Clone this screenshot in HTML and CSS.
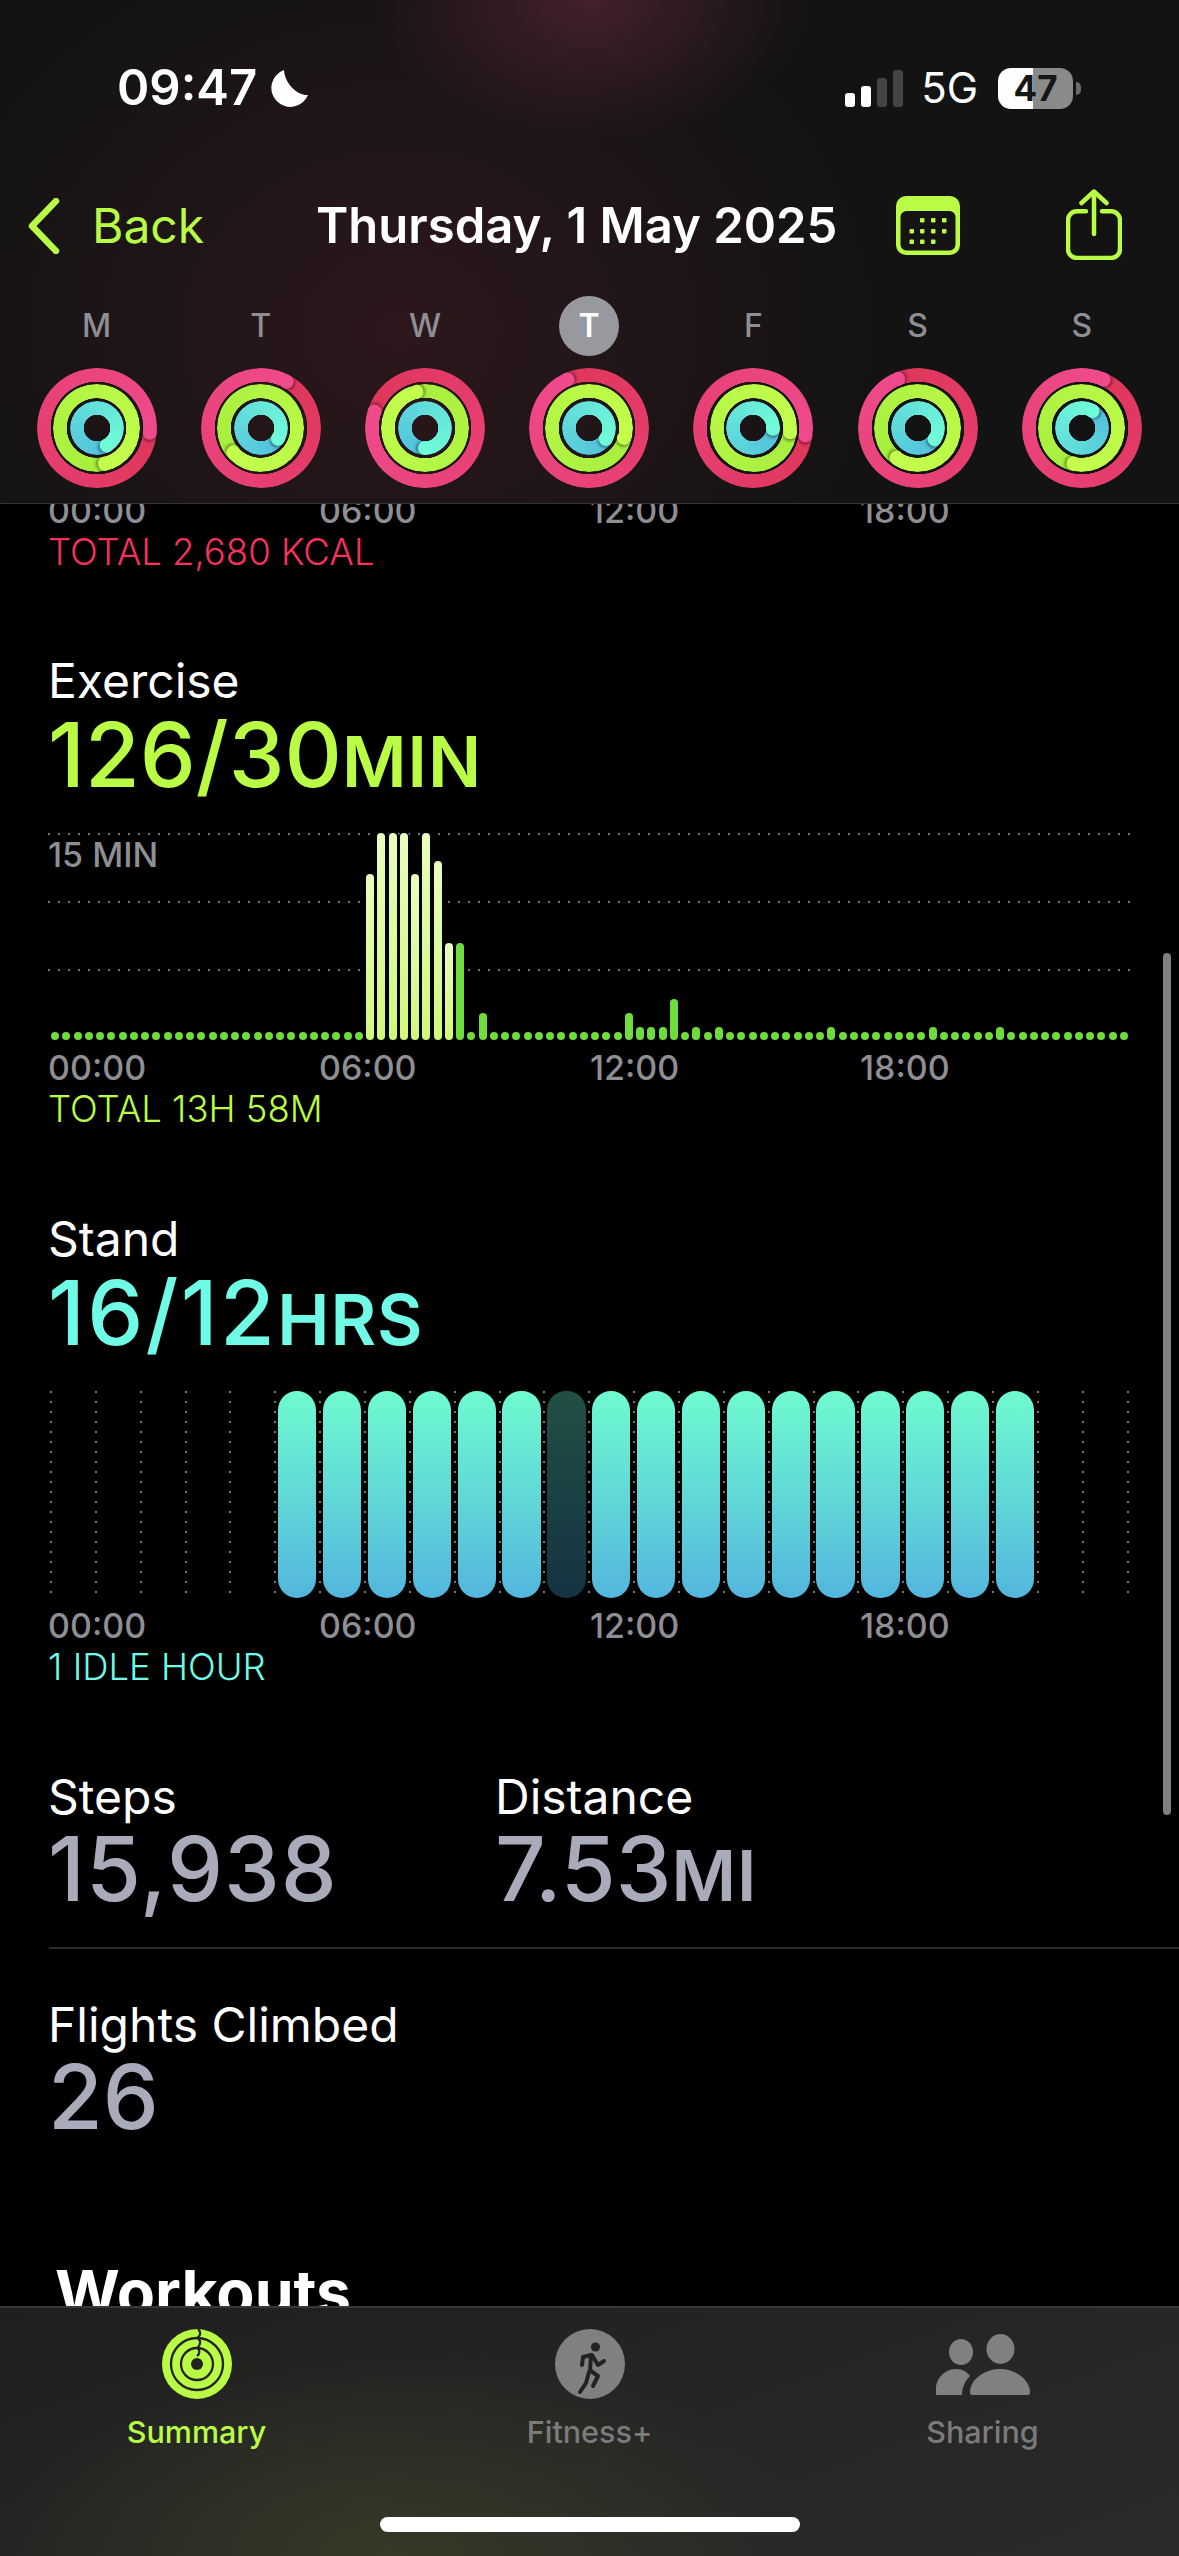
FILE: index.html
```html
<!DOCTYPE html>
<html lang="en">
<head>
  <meta charset="UTF-8" />
  <meta name="viewport" content="width=device-width, initial-scale=1.0"/>
  <title>Activity Summary</title>
  <link rel="stylesheet" href="styles.css">
</head>
<body>
  <div class="app">
    <header class="top-bar">
      <div class="status-row">
        <div class="status-left">
          <span class="clock">09:47</span>
          <svg class="moon" viewBox="0 0 39 37"><path d="M15 0A19 19 0 1 0 39 25C30 26 16 15 15 0Z" fill="#fff"/></svg>
        </div>
        <div class="status-right">
          <div class="signal">
            <i class="sig-1"></i><i class="sig-2"></i><i class="sig-3"></i><i class="sig-4"></i>
          </div>
          <span class="network">5G</span>
          <div class="battery"><span>47</span></div>
          <div class="battery-nub"></div>
        </div>
      </div>

      <nav class="nav-row">
        <svg class="chevron" viewBox="0 0 32 56"><path d="M28 3L4 28L28 53" fill="none" stroke="#b9fb45" stroke-width="6.5" stroke-linecap="round" stroke-linejoin="round"/></svg>
        <span class="back">Back</span>
        <span class="date-title">Thursday, 1 May 2025</span>
        <svg class="calendar" viewBox="0 0 64 59">
          <rect width="64" height="59" rx="10" fill="#b9fb45"/>
          <rect x="4.5" y="15" width="55" height="39.5" rx="6" fill="#151314"/>
          <g fill="#b9fb45">
            <rect x="24" y="22" width="4.5" height="4.5" rx="1"/><rect x="35" y="22" width="4.5" height="4.5" rx="1"/><rect x="46" y="22" width="4.5" height="4.5" rx="1"/>
            <rect x="13.5" y="33" width="4.5" height="4.5" rx="1"/><rect x="24" y="33" width="4.5" height="4.5" rx="1"/><rect x="35" y="33" width="4.5" height="4.5" rx="1"/><rect x="46" y="33" width="4.5" height="4.5" rx="1"/>
            <rect x="13.5" y="43.5" width="4.5" height="4.5" rx="1"/><rect x="24" y="43.5" width="4.5" height="4.5" rx="1"/><rect x="35" y="43.5" width="4.5" height="4.5" rx="1"/>
          </g>
        </svg>
        <svg class="share" viewBox="0 0 56 71">
          <g fill="none" stroke="#b9fb45" stroke-width="4.5" stroke-linecap="round" stroke-linejoin="round">
            <path d="M20 22.25H11a9 9 0 0 0-9 9V60a9 9 0 0 0 9 9H45a9 9 0 0 0 9-9V31.25a9 9 0 0 0-9-9H36"/>
            <path d="M28 3V45M15.5 14L28 2.5L40.5 14"/>
          </g>
        </svg>
      </nav>

      <div class="week" id="week"></div>
    </header>

    <main class="content">
      <section class="move-tail">
        <div class="axis"><span>00:00</span><span>06:00</span><span>12:00</span><span>18:00</span></div>
        <div class="total total-move">TOTAL 2,680 KCAL</div>
      </section>

      <section class="metric">
        <div class="metric-title">Exercise</div>
        <div class="metric-value lime value-tight">126/30<small>MIN</small></div>
        <div class="exercise-chart">
          <div class="grid-rows"><i></i><i></i><i></i></div>
          <div class="chart-note">15 MIN</div>
          <div class="bars" id="exerciseBars"></div>
        </div>
        <div class="axis"><span>00:00</span><span>06:00</span><span>12:00</span><span>18:00</span></div>
        <div class="total lime">TOTAL 13H 58M</div>
      </section>

      <section class="metric metric-stand">
        <div class="metric-title">Stand</div>
        <div class="metric-value mint value-wide">16/12<small>HRS</small></div>
        <div class="stand-chart" id="standBars"></div>
        <div class="axis"><span>00:00</span><span>06:00</span><span>12:00</span><span>18:00</span></div>
        <div class="total mint">1 IDLE HOUR</div>
      </section>

      <section class="metric stat-pair">
        <div class="stat-steps">
          <div class="metric-title">Steps</div>
          <div class="metric-value grey">15,938</div>
        </div>
        <div>
          <div class="metric-title">Distance</div>
          <div class="metric-value grey value-tight">7.53<small>MI</small></div>
        </div>
      </section>

      <div class="divider"></div>

      <section class="flights">
        <div class="metric-title">Flights Climbed</div>
        <div class="metric-value grey value-tight">26</div>
      </section>

      <h2 class="workouts">Workouts</h2>
    </main>

    <footer class="tab-bar">
      <div class="tab tab-active">
        <svg class="tab-icon" viewBox="0 0 70 70">
          <circle cx="35" cy="35" r="35" fill="#b9fb45"/>
          <g fill="none" stroke="#222" stroke-width="2.3">
            <circle cx="35" cy="35" r="26"/>
            <circle cx="35" cy="35" r="16"/>
            <path d="M36 0C39 3 39 6 35.5 9C39 11 39 15 35.5 19C38 21 38 25 35 27"/>
          </g>
          <circle cx="35" cy="35" r="6" fill="#222"/>
        </svg>
        <span>Summary</span>
      </div>
      <div class="tab">
        <svg class="tab-icon" viewBox="0 0 70 70">
          <circle cx="35" cy="35" r="35" fill="#808080"/>
          <circle cx="40.5" cy="18" r="4.6" fill="#222"/>
          <g fill="none" stroke="#222" stroke-width="4" stroke-linecap="round" stroke-linejoin="round">
            <path d="M35 42L36 26L28 28L27 36"/>
            <path d="M37 26L43 36L49 32"/>
            <path d="M36 42L43 47L38 57"/>
            <path d="M34 43L31 54L25 63"/>
          </g>
        </svg>
        <span>Fitness+</span>
      </div>
      <div class="tab">
        <svg class="tab-icon tab-icon-wide" viewBox="0 0 98 70">
          <g fill="#808080">
            <ellipse cx="27" cy="23" rx="12" ry="13"/>
            <ellipse cx="66.5" cy="20" rx="14" ry="15"/>
            <path d="M2 66V60C2 48 12 40 22 40C29 40 33 43 36 47C31 52 28 59 28 66Z"/>
            <path d="M38 66C36 66 36 64 36 62C37 50 51 40 66 40C81 40 95 50 96 62C96 64 96 66 94 66Z"/>
          </g>
        </svg>
        <span>Sharing</span>
      </div>
      <div class="home-indicator"></div>
    </footer>

    <div class="scrollbar"></div>
  </div>

  <script src="script.js"></script>
</body>
</html>
```

FILE: styles.css
```css
* {
  box-sizing: border-box;
}
body {
  margin: 0;
  background: #000;
  font-family: Inter, "Liberation Sans", sans-serif;
  color: #fff;
}
.app {
  position: relative;
  width: 1179px;
  height: 2556px;
  display: flex;
  flex-direction: column;
  overflow: hidden;
}
.lime { color: #b9fb45; }
.mint { color: #6ffbe6; }
.grey { color: #a9abba; }

/* top bar */
.top-bar {
  height: 504px;
  flex: none;
  border-bottom: 1px solid #333;
  background:
    radial-gradient(ellipse 220px 140px at 590px 0, #43202e, transparent),
    radial-gradient(ellipse 480px 400px at 400px 330px, #2c171c, transparent),
    #131313;
}
.status-row {
  display: flex;
  justify-content: space-between;
  align-items: center;
  height: 56px;
  margin-top: 60px;
  padding: 0 98px 0 117px;
}
.status-left {
  display: flex;
  align-items: center;
  gap: 12px;
}
.clock {
  font-size: 49px;
  font-weight: 600;
  line-height: 56px;
}
.moon {
  width: 39px;
  height: 37px;
}
.status-right {
  display: flex;
  align-items: center;
}
.signal {
  display: flex;
  align-items: flex-end;
  gap: 6px;
  height: 37px;
}
.signal i {
  display: block;
  width: 10px;
  border-radius: 3px;
  background: #fff;
}
.signal .sig-1 { height: 14px; }
.signal .sig-2 { height: 21px; }
.signal .sig-3 { height: 29px; background: #444; }
.signal .sig-4 { height: 37px; background: #444; }
.network {
  margin-left: 18px;
  font-size: 42px;
  line-height: 56px;
}
.battery {
  width: 75px;
  height: 41px;
  margin-left: 20px;
  border-radius: 13px;
  background: linear-gradient(to right, #fff 47%, #8a8a8a 47%);
  color: #161616;
  font-size: 35px;
  font-weight: 700;
  line-height: 41px;
  text-align: center;
}
.battery-nub {
  width: 5px;
  height: 13px;
  margin-left: 3px;
  border-radius: 0 6px 6px 0;
  background: #6b6b6b;
}
.nav-row {
  display: flex;
  align-items: center;
  height: 80px;
  margin-top: 70px;
  padding-left: 28px;
}
.chevron {
  width: 32px;
  height: 56px;
}
.back {
  margin-left: 32px;
  width: 224px;
  font-size: 48px;
  color: #b9fb45;
  line-height: 84px;
}
.date-title {
  width: 580px;
  font-size: 49px;
  font-weight: 600;
  line-height: 84px;
}
.calendar {
  width: 64px;
  height: 59px;
  margin-top: -2px;
}
.share {
  width: 56px;
  height: 71px;
  margin-left: 106px;
  margin-top: -4px;
}
.week {
  display: flex;
  margin-top: 30px;
  padding-left: 14.5px;
}
.day {
  width: 164.2px;
  display: flex;
  flex-direction: column;
  align-items: center;
}
.day-letter {
  width: 60px;
  height: 60px;
  border-radius: 50%;
  color: #8e8e93;
  font-size: 32px;
  font-weight: 500;
  line-height: 60px;
  text-align: center;
}
.day-today {
  background: #98989f;
  color: #fff;
  font-weight: 600;
}

/* activity rings */
.rings {
  position: relative;
  width: 120px;
  height: 120px;
  margin-top: 12px;
}
.ring {
  position: absolute;
  border-radius: 50%;
}
.ring-fill {
  position: absolute;
  inset: 0;
  border-radius: 50%;
  -webkit-mask: radial-gradient(circle closest-side, transparent calc(100% - 14px), #000 calc(100% - 13.5px));
  mask: radial-gradient(circle closest-side, transparent calc(100% - 14px), #000 calc(100% - 13.5px));
}
.ring-cap {
  position: absolute;
  top: 0;
  left: 50%;
  width: 13.5px;
  height: 13.5px;
  margin-left: -6.75px;
  border-radius: 50%;
  box-shadow: 2px 0 3px rgba(0, 0, 0, 0.4);
}
.ring-head {
  position: absolute;
  inset: 0;
}
.ring-move { inset: 0; }
.ring-exercise { inset: 16.3px; }
.ring-stand { inset: 33px; }

/* scrolling content */
.content {
  flex: 1;
  min-height: 0;
  overflow: hidden;
  background: #000;
}
.move-tail {
  margin-top: -13px;
}
.axis {
  position: relative;
  height: 40px;
  color: #8e8e93;
  font-size: 34px;
  font-weight: 500;
  line-height: 40px;
}
.axis span {
  position: absolute;
  top: 0;
}
.axis span:nth-child(1) { left: 48px; }
.axis span:nth-child(2) { left: 319px; }
.axis span:nth-child(3) { left: 590px; }
.axis span:nth-child(4) { left: 860px; }
.total {
  height: 42px;
  padding-left: 48px;
  font-size: 36.5px;
  font-weight: 300;
  line-height: 42px;
}
.total-move {
  color: #f5325c;
}
.metric {
  margin-top: 77px;
}
.metric-stand {
  margin-top: 78px;
}
.metric-title {
  height: 60px;
  padding-left: 48px;
  font-size: 48px;
  line-height: 62px;
}
.metric-value {
  height: 90px;
  padding-left: 48px;
  font-size: 89px;
  font-weight: 500;
  line-height: 90px;
  letter-spacing: 1px;
}
.value-tight {
  letter-spacing: 0;
}
.value-wide {
  letter-spacing: 2.3px;
}
.metric-value small {
  font-size: 70px;
  font-weight: 600;
  letter-spacing: 1px;
}

/* exercise chart */
.exercise-chart {
  position: relative;
  height: 207px;
  margin-top: 33px;
  margin-bottom: 8px;
}
.grid-rows {
  position: absolute;
  top: 0;
  left: 48px;
  width: 1083px;
}
.grid-rows i {
  display: block;
  height: 2px;
  margin-bottom: 66px;
  background: repeating-linear-gradient(to right, #777 0 2px, transparent 2px 10px);
}
.chart-note {
  position: absolute;
  top: 2px;
  left: 48px;
  color: #8e8e93;
  font-size: 34px;
  font-weight: 500;
  line-height: 40px;
}
.bars {
  position: relative;
  display: flex;
  align-items: flex-end;
  gap: 3.26px;
  height: 100%;
  padding-left: 51.2px;
}
.bar {
  flex: none;
  width: 8px;
  min-height: 8px;
  border-radius: 4px;
  background: #6fdc3e;
  box-shadow: 0 0 0 1.5px #000;
}
.bar-light {
  background: linear-gradient(#eafdc0, #cff87c);
}

/* stand chart */
.stand-chart {
  display: flex;
  height: 207px;
  margin-top: 33px;
  margin-bottom: 8px;
  padding-left: 50px;
}
.hour {
  flex: none;
  width: 44.87px;
  padding-left: 3.8px;
  background: repeating-linear-gradient(to bottom, #777 0 2px, transparent 2px 10px) 0 0 / 2px 202px no-repeat;
}
.hour-bar {
  width: 38.3px;
  height: 100%;
  border-radius: 19px;
  background: linear-gradient(#6ffbd0, #53b6de);
}
.hour-idle {
  background: linear-gradient(#214f44, #143342);
}

/* steps and flights */
.stat-pair {
  display: flex;
  margin-top: 78px;
}
.stat-pair .metric-value,
.flights .metric-value {
  margin-top: -2px;
}
.stat-steps {
  width: 447px;
}
.divider {
  height: 2px;
  margin: 33px 0 0 49px;
  background: #2a2a2a;
}
.flights {
  margin-top: 45px;
}
.workouts {
  margin: 112px 0 0 55px;
  font-size: 62.5px;
  font-weight: 700;
  line-height: 76px;
}

/* tab bar */
.tab-bar {
  position: relative;
  flex: none;
  display: grid;
  grid-template-columns: repeat(3, 1fr);
  height: 250px;
  padding-top: 21px;
  border-top: 2px solid #383838;
  background:
    radial-gradient(ellipse 420px 210px at 390px 100%, #343a26, transparent),
    linear-gradient(160deg, #1f1f1f, #2b2b2b);
}
.tab {
  display: flex;
  flex-direction: column;
  align-items: center;
  color: #7b7b7b;
  font-size: 30.5px;
  font-weight: 500;
}
.tab-active {
  color: #b9fb45;
}
.tab-icon {
  width: 70px;
  height: 70px;
  margin-bottom: 14px;
}
.tab-icon-wide {
  width: 98px;
}
.home-indicator {
  position: absolute;
  left: 380px;
  bottom: 24px;
  width: 420px;
  height: 15px;
  border-radius: 8px;
  background: #fff;
}
.scrollbar {
  position: absolute;
  top: 953px;
  left: 1163px;
  width: 8px;
  height: 862px;
  border-radius: 4px;
  background: #808080;
}
```

FILE: script.js
```js
// head angle of each ring, clockwise from 12 o'clock
const days = [
  { letter: "M", move: 95, exercise: 168, stand: 151 },
  { letter: "T", move: 29, exercise: 229, stand: 122 },
  { letter: "W", move: 288, exercise: 348, stand: 180 },
  { letter: "T", move: 336, exercise: 107, stand: 123, today: true },
  { letter: "F", move: 98, exercise: 98, stand: 92 },
  { letter: "S", move: 338, exercise: 216, stand: 124 },
  { letter: "S", move: 24, exercise: 194, stand: 32 }
];

const ringColors = {
  move: ["#df365a", "#ef4a8c"],
  exercise: ["#a6ee3e", "#c4ff4c"],
  stand: ["#52bedd", "#70fcd8"]
};

function makeRing(name, angle) {
  const [tail, head] = ringColors[name];
  const ring = document.createElement("div");
  ring.className = `ring ring-${name}`;

  const fill = document.createElement("div");
  fill.className = "ring-fill";
  fill.style.background = `conic-gradient(from ${angle}deg, ${tail}, ${head})`;

  const headBox = document.createElement("div");
  headBox.className = "ring-head";
  headBox.style.transform = `rotate(${angle}deg)`;

  const cap = document.createElement("div");
  cap.className = "ring-cap";
  cap.style.background = head;
  headBox.appendChild(cap);

  ring.append(fill, headBox);
  return ring;
}

const week = document.getElementById("week");
days.forEach(d => {
  const day = document.createElement("div");
  day.className = "day";

  const letter = document.createElement("div");
  letter.className = d.today ? "day-letter day-today" : "day-letter";
  letter.textContent = d.letter;

  const rings = document.createElement("div");
  rings.className = "rings";
  rings.append(makeRing("move", d.move), makeRing("exercise", d.exercise), makeRing("stand", d.stand));

  day.append(letter, rings);
  week.appendChild(day);
});

// exercise minutes, one bar per 15 min: index -> bar height in px
const exerciseHeights = {
  28: 166, 29: 207, 30: 207, 31: 207, 32: 166, 33: 207, 34: 179, 35: 97,
  36: 97, 38: 27, 51: 27, 52: 13, 53: 13, 54: 13, 55: 41, 57: 13, 59: 13,
  69: 13, 78: 13, 84: 13
};
const exerciseBars = document.getElementById("exerciseBars");
for (let i = 0; i < 96; i++) {
  const bar = document.createElement("div");
  bar.className = i >= 28 && i <= 35 ? "bar bar-light" : "bar";
  bar.style.height = `${exerciseHeights[i] || 8}px`;
  exerciseBars.appendChild(bar);
}

// stand hours: 25 grid lines, bars from 05:00 to 21:00, 11:00 was idle
const standBars = document.getElementById("standBars");
for (let h = 0; h < 25; h++) {
  const hour = document.createElement("div");
  hour.className = "hour";
  if (h >= 5 && h <= 21) {
    const bar = document.createElement("div");
    bar.className = h === 11 ? "hour-bar hour-idle" : "hour-bar";
    hour.appendChild(bar);
  }
  standBars.appendChild(hour);
}
```
